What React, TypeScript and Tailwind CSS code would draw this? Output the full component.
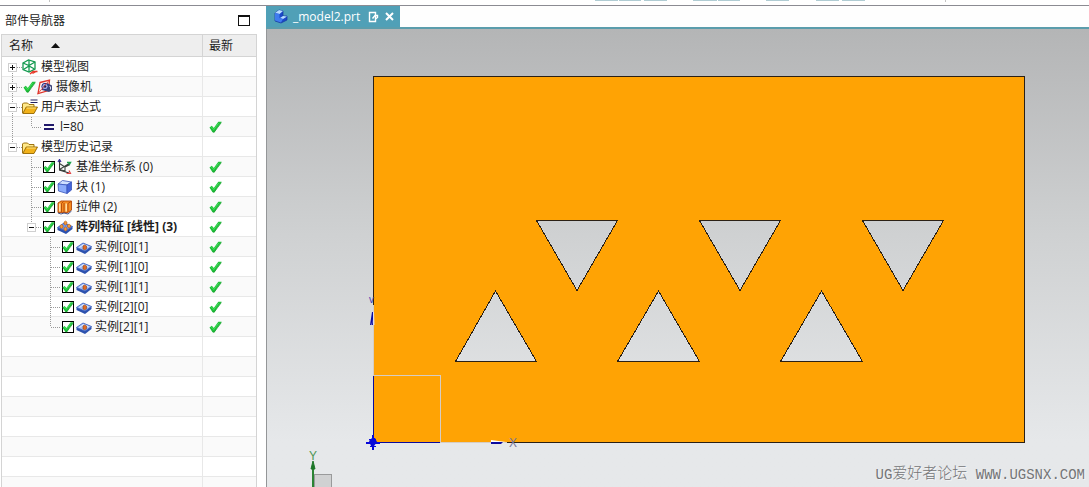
import React, { useState } from "react";

type IconName = "view" | "camera" | "expr" | "folder" | "equals" | "csys" | "block" | "extrude" | "pattern" | "instance";
type Guide = "none" | "blank" | "line" | "tee" | "end" | "plus" | "minus-mid" | "minus-end";

interface TreeItem {
  id: string;
  label: string;
  icon: IconName;
  guides: Guide[];
  checkbox?: boolean;
  tick?: boolean;
  latest?: boolean;
  bold?: boolean;
}

const items: TreeItem[] = [
  { id: "views", label: "模型视图", icon: "view", guides: ["plus"] },
  { id: "cameras", label: "摄像机", icon: "camera", guides: ["plus"], tick: true },
  { id: "exprs", label: "用户表达式", icon: "expr", guides: ["minus-mid"] },
  { id: "l", label: "l=80", icon: "equals", guides: ["line", "end"], latest: true },
  { id: "history", label: "模型历史记录", icon: "folder", guides: ["minus-end"] },
  { id: "csys", label: "基准坐标系 (0)", icon: "csys", guides: ["blank", "tee"], checkbox: true, latest: true },
  { id: "block", label: "块 (1)", icon: "block", guides: ["blank", "tee"], checkbox: true, latest: true },
  { id: "extrude", label: "拉伸 (2)", icon: "extrude", guides: ["blank", "tee"], checkbox: true, latest: true },
  { id: "pattern", label: "阵列特征 [线性] (3)", icon: "pattern", guides: ["blank", "minus-end"], checkbox: true, latest: true, bold: true },
  { id: "i01", label: "实例[0][1]", icon: "instance", guides: ["blank", "blank", "tee"], checkbox: true, latest: true },
  { id: "i10", label: "实例[1][0]", icon: "instance", guides: ["blank", "blank", "tee"], checkbox: true, latest: true },
  { id: "i11", label: "实例[1][1]", icon: "instance", guides: ["blank", "blank", "tee"], checkbox: true, latest: true },
  { id: "i20", label: "实例[2][0]", icon: "instance", guides: ["blank", "blank", "tee"], checkbox: true, latest: true },
  { id: "i21", label: "实例[2][1]", icon: "instance", guides: ["blank", "blank", "end"], checkbox: true, latest: true },
];

const emptyRows = [0, 1, 2, 3, 4, 5, 6, 7];

const Tick = ({ className = "" }: { className?: string }) => (
  <svg width="13" height="12" viewBox="0 0 13 12" className={className} aria-hidden="true">
    <path d="M0.5 6.5 L2.8 4.8 L4.8 7 L9.3 0.8 L12.7 0.8 L8.2 6.8 L5.2 11.6 L3.3 11 Z" fill="#1fc03a" />
    <path d="M12.3 1.6 L8.4 6.8 L5.2 11.2 L3.6 10.8" fill="none" stroke="#149a2a" strokeWidth=".8" />
    <path d="M2.4 6 L4.7 8.6 L9.8 1.8" fill="none" stroke="#42e05a" strokeWidth="1" />
  </svg>
);

const ItemIcon = ({ name }: { name: IconName }) => (
  <svg width="16" height="16" viewBox="0 0 16 16" className="shrink-0" aria-hidden="true">
    {name === "view" && (
      <g fill="none" stroke="#149a50" strokeWidth="1.3">
        <path d="M1 4 L6.5 1 L13 3 V10 L7 13 L1 10.5 Z" />
        <path d="M1 4 L7 6.5 L13 3 M7 1 V13 M1.5 10.5 L7 7 L12.5 10" />
        <path d="M8 15 L11 12.5 H15.5 M10.5 14.5 L15 12" stroke="#e83a2a" strokeWidth="1.4" />
      </g>
    )}
    {name === "camera" && (
      <g>
        <path d="M3 3.5 L12.5 1 L11.5 11.5 L1 14.5 Z" fill="#fff0ee" stroke="#e0352c" strokeWidth="1.3" />
        <path d="M5 6 L10 4 L15 6.5 V11.5 L12 13 L5 11 Z" fill="#3c4478" />
        <circle cx="8" cy="7.5" r="3.2" fill="#a3afe6" stroke="#2a3384" />
        <circle cx="8" cy="7.5" r="1.3" fill="#1c2258" />
        <path d="M1 14.5 L12.5 1" stroke="#e0352c" strokeWidth=".8" />
        <path d="M12.5 7 L13.5 8 V10.5" stroke="#d8dcef" fill="none" />
      </g>
    )}
    {(name === "folder" || name === "expr") && (
      <g stroke="#946600" strokeWidth=".9">
        <path d="M.5 14 V5 L1.5 4 H5.5 L7 5.5 H12 V8" fill="#ffe98a" />
        <path d="M.8 14.5 L4.2 8 H15.5 L12 14.5 Z" fill="#f2b21a" />
        <path d="M4.7 9 H13.8" stroke="#ffe78a" />
        {name === "expr" && <path d="M8.5 1 H15.5 M8.5 3.5 H15.5" stroke="#202060" strokeWidth="1.1" />}
      </g>
    )}
    {name === "equals" && <path d="M3 6 H13 M3 10 H13" stroke="#20186a" strokeWidth="2" />}
    {name === "csys" && (
      <g fill="none" strokeWidth="1.1">
        <path d="M2.5 2 V11 L12 14" stroke="#333" />
        <path d="M2.5 10.5 L13 4 M2.5 4.5 L8 8 V12 L2.5 10.5 M8 8 L13 5.5" stroke="#37423c" />
        <path d="M10 3.5 H13.5 L12 6" stroke="#18a04a" strokeWidth="1.4" />
        <path d="M9.5 14.5 H13.5 L12 11.5" stroke="#e24343" strokeWidth="1.2" />
        <path d="M1 3 L2.5 .5 L4 3" stroke="#302c9d" strokeWidth="1.2" />
      </g>
    )}
    {name === "block" && (
      <g stroke="#3a55bb" strokeWidth=".8" strokeLinejoin="round">
        <path d="M1 5 L5.5 1.5 L14.5 3 L10 6 Z" fill="#cfe0ff" />
        <path d="M1 5 L10 6 V14.5 L1.5 12 Z" fill="#8cacfb" />
        <path d="M10 6 L14.5 3 V11 L10 14.5 Z" fill="#4565da" />
      </g>
    )}
    {name === "extrude" && (
      <g stroke="#b4480a" strokeWidth=".9">
        <path d="M1 4 L4 2 H14.5 V11 L11 13.5 H1 Z" fill="#f58b20" />
        <path d="M2.8 4.5 V12.5 M9.2 4.5 V12.5" stroke="#ffdca0" strokeWidth="1.6" />
        <path d="M4.5 4.5 L6.5 2.5 M4.5 4.5 V13 M7 4 V13 M11 4.5 V13 M11 4.5 L14 2.5" />
        <path d="M1 14 L4 15 L7 14 L11 15 L14.5 12" fill="none" stroke="#30427c" />
      </g>
    )}
    {(name === "pattern" || name === "instance") && (
      <g>
        <path d="M.5 8.5 L7 4 L15.5 7.5 V10 L9 15 L.5 11 Z" fill="#2c51ae" />
        <path d="M.5 8.5 L7 4 L15.5 7.5 L9 12 Z" fill={name === "instance" ? "#a3bef6" : "#6f96ea"} stroke="#4066c4" strokeWidth=".8" />
        {name === "pattern" ? (
          <g fill="#f5983a" stroke="#a65012" strokeWidth=".5">
            <path d="M7 5 V3 L8.5 2 L10 3 V5 L8.5 6 Z" />
            <path d="M3 8.5 V6.5 L4.5 5.5 L6 6.5 V8.5 L4.5 9.5 Z" />
            <path d="M10.5 8 V6 L12 5 L13.5 6 V8 L12 9 Z" />
            <path d="M7 11 V9 L8.5 8 L10 9 V11 L8.5 12 Z" />
          </g>
        ) : (
          <g>
            <path d="M3.5 8.5 L7.3 5.7 L12.5 7.7" fill="none" stroke="#f4f8ff" strokeWidth=".8" />
            <path d="M7 10 V7 L8.5 6 L10.5 7 V9.8 L8.8 10.8 Z" fill="#e06a24" stroke="#8e441d" strokeWidth=".6" />
          </g>
        )}
      </g>
    )}
  </svg>
);

// One 19px wide step of the tree, with its dotted connectors
const GuideCell = ({ guide, first, label }: { guide: Guide; first: boolean; label: string }) => {
  const toggle = guide === "plus" || guide === "minus-mid" || guide === "minus-end";
  const up = guide !== "blank" && !first;
  const down = guide === "tee" || guide === "line" || guide === "plus" || guide === "minus-mid";
  const across = toggle || guide === "tee" || guide === "end";
  const lines = (
    <svg width="19" height="19" shapeRendering="crispEdges" stroke="#999" strokeDasharray="1 1" aria-hidden="true">
      {up && <path d="M9.5 0 V10" />}
      {down && <path d="M9.5 10 V19" />}
      {across && <path d="M10 10.5 H19" />}
      {toggle && (
        <g strokeDasharray="none">
          <rect x="5.5" y="6.5" width="8" height="8" fill="#fff" stroke="#cfcfcf" />
          <path d="M7 10.5 H12" stroke="#111" />
          {guide === "plus" && <path d="M9.5 8 V13" stroke="#111" />}
        </g>
      )}
    </svg>
  );
  if (toggle) {
    return (
      <button type="button" aria-label={label} className="w-[19px] h-[19px] shrink-0">
        {lines}
      </button>
    );
  }
  return <span className="w-[19px] h-[19px] shrink-0">{lines}</span>;
};

const TreeRow = ({ item, index }: { item: TreeItem; index: number }) => {
  const [checked, setChecked] = useState(true);
  return (
    <tr className="even:bg-[#fafafa]">
      <td className="p-0 border-b border-r border-[#e8e8e8]">
        <div className="flex items-center h-[19px] pl-px">
          {item.guides.map((guide, i) => (
            <GuideCell key={i} guide={guide} first={index === 0} label={item.label} />
          ))}
          {item.checkbox && (
            <span className="relative w-3 h-3 mx-0.5 mt-px shrink-0">
              <input
                id={item.id}
                type="checkbox"
                checked={checked}
                onChange={(e) => setChecked(e.target.checked)}
                className="block appearance-none w-3 h-3 bg-white border border-black"
              />
              {checked && <Tick className="absolute inset-0 pointer-events-none w-3 h-3" />}
            </span>
          )}
          {item.tick && <Tick className="mx-px shrink-0" />}
          <ItemIcon name={item.icon} />
          {item.checkbox ? (
            <label htmlFor={item.id} className={item.bold ? "ml-[3px] font-bold whitespace-nowrap" : "ml-[3px] whitespace-nowrap"}>
              {item.label}
            </label>
          ) : (
            <span className="ml-[3px] whitespace-nowrap">{item.label}</span>
          )}
        </div>
      </td>
      <td className="p-0 pl-1.5 border-b border-[#e8e8e8]">{item.latest && <Tick />}</td>
    </tr>
  );
};

const Navigator = () => (
  <aside className="w-[266px] shrink-0 flex flex-col overflow-hidden bg-white">
    <div className="flex items-center justify-between h-7 shrink-0 pl-[5px] pr-4 pt-px">
      <h2>部件导航器</h2>
      <button type="button" aria-label="最大化" className="w-3 h-[11px] border border-t-2 border-[#111]" />
    </div>
    <div className="flex-1 min-h-0 overflow-hidden ml-px mr-[9px] border border-b-0 border-[#d4d4d4]">
      <table className="w-full table-fixed border-separate border-spacing-0">
        <thead className="bg-[#eeeeee]">
          <tr>
            <th className="h-[22px] p-0 pl-[7px] font-normal text-left border-b border-r border-[#d4d4d4]">
              <div className="flex items-center">
                名称
                <svg width="9" height="5" viewBox="0 0 9 5" className="ml-[18px]" aria-hidden="true">
                  <path d="M4.5 0 L9 5 H0 Z" fill="#111" />
                </svg>
              </div>
            </th>
            <th className="w-[53px] h-[22px] p-0 pl-1.5 font-normal text-left border-b border-[#d4d4d4]">最新</th>
          </tr>
        </thead>
        <tbody>
          {items.map((item, index) => (
            <TreeRow key={item.id} item={item} index={index} />
          ))}
          {emptyRows.map((row) => (
            <tr key={row} className="even:bg-[#fafafa]">
              <td className="h-5 p-0 border-b border-r border-[#e8e8e8]" />
              <td className="h-5 p-0 border-b border-[#e8e8e8]" />
            </tr>
          ))}
        </tbody>
      </table>
    </div>
  </aside>
);

const ModelDrawing = () => (
  <svg className="block w-full h-full" role="img" aria-label="model2" fontFamily="'Liberation Sans', sans-serif">
    {/* plate with the two rows of triangular cut-outs */}
    <path
      fillRule="evenodd"
      fill="#ffa304"
      stroke="#2b2014"
      shapeRendering="crispEdges"
      d="M106.5 47.5 H757.5 V413.5 H106.5 Z
         M269.5 191.5 H350.5 L310 261.5 Z M432.5 191.5 H513.5 L473 261.5 Z M595.5 191.5 H676.5 L636 261.5 Z
         M228.5 262 L269.5 332.5 H188.5 Z M391.5 262 L432.5 332.5 H350.5 Z M554.5 262 L595.5 332.5 H513.5 Z"
    />
    <g fill="none" shapeRendering="crispEdges">
      <path d="M106.5 276 V346.5 H173.5 V413.5 H240" stroke="#d6cdc4" />
      <path d="M106.5 347 V413.5 H173" stroke="#0b0b9c" />
      <path d="M105.5 406 V421 M99 413.5 H113" stroke="#0808d8" strokeWidth="2" />
      <path d="M102 410.5 H109 M103 417.5 H109" stroke="#0808d8" />
    </g>
    <path d="M102 412 L105 409 H108 L110 413 L107 417 H104 Z" fill="#0808d8" />
    <path d="M103 296 L105 283 L107 283 L107.5 296 Z" fill="#dcdcf0" />
    <path d="M103 296 L105 283 H106 V296 H105 L105.5 290 L104.5 296 Z" fill="#0c0ca0" />
    <path d="M224 411 L239 413 L224 415 Z" fill="#ffffff" />
    <path d="M224 413 H236 L234 415 H224 Z" fill="#0c0ca0" />
    <text x="102" y="274" fontSize="10" fill="#3c3cb4">v</text>
    <text x="242" y="418" fontSize="12" fill="#77779a">X</text>
    {/* view triad */}
    <rect x="47.5" y="445.5" width="17" height="20" fill="#d0d1d2" stroke="#999a9b" shapeRendering="crispEdges" />
    <path d="M46 440 V460" stroke="#2b8434" strokeWidth="2" />
    <path d="M46 432 L48 440 H44 Z" fill="#1c7628" stroke="#1c7628" />
    <text x="42" y="431" fontSize="12" fill="#4d9654">Y</text>
  </svg>
);

const Viewport = () => (
  <main className="flex-1 min-w-0 flex flex-col bg-[#fefefe]">
    <div className="flex h-[23px] shrink-0 border-b-2 border-[#5b9dac]">
      <div className="flex items-center w-[134px] pl-2 text-white bg-[#50a0b7]">
        <svg width="14" height="15" viewBox="0 0 14 15" aria-hidden="true">
          <path d="M1 4 L5 1 L9 2 V7 L13 7 V11 L7 14 L1 12 Z" fill="#1b48c8" stroke="#1638a0" strokeWidth=".7" />
          <path d="M1 4 L5 1 L9 2 L5.5 5 Z M6 9 L9 7 L13 7.5 L9 10 Z" fill="#b7dcff" />
          <path d="M1 4 L5.5 5 V9 L9 10 L7 13.5 L1 11.5 Z" fill="#3f7cee" />
        </svg>
        <span className="ml-[5px]">_model2.prt</span>
        <svg width="11" height="12" viewBox="0 0 11 12" className="ml-2" fill="none" stroke="#fff" strokeWidth="1.4" aria-hidden="true">
          <path d="M5.5 10.5 H1.5 V1.5 H7.5 V10.5 H5.5" />
          <path d="M4.5 7.5 L7 4.5 H9.5 V6.5 L7.5 8" />
        </svg>
        <button type="button" aria-label="关闭" className="ml-1.5">
          <svg width="9" height="9" viewBox="0 0 9 9" stroke="#fff" strokeWidth="2">
            <path d="M1 1 L8 8 M8 1 L1 8" />
          </svg>
        </button>
      </div>
    </div>
    <div className="relative flex-1 min-h-0 overflow-hidden border-l border-[#949698] bg-linear-to-b from-[#b4b5b6] via-[#cfd1d2] via-45% to-[#e6e8ea] to-90%">
      <ModelDrawing />
      <p className="absolute right-1 bottom-0.5 flex items-center text-[#747577] leading-5 whitespace-pre [text-shadow:1px_1px_0_#f4f5f6] font-['Liberation_Mono','Noto_Sans_CJK_SC',monospace]">
        <span className="text-[14px]">UG</span>
        <span className="text-[15px] font-light">爱好者论坛</span>
        <span className="text-[14px]"> WWW.UGSNX.COM</span>
      </p>
    </div>
  </main>
);

export default function App() {
  return (
    <div className="flex flex-col h-screen overflow-hidden bg-white text-[12px] leading-4 text-[#1c1c1c] font-['Open_Sans','Noto_Sans_CJK_SC',sans-serif]">
      <div className="h-1.5 shrink-0 border-b border-[#8b8b92] bg-white">
        <svg className="block w-full h-[5px]" shapeRendering="crispEdges" aria-hidden="true">
          <path d="M595 .5 H618 M619 .5 H641 M644 .5 H667 M693 .5 H717 M718 .5 H740 M766 .5 H789 M816 .5 H839 M842 .5 H865" stroke="#b0ccd3" />
          <path d="M49.5 0 V2 M945.5 0 V2" stroke="#c4c4c4" />
        </svg>
      </div>
      <div className="flex flex-1 min-h-0">
        <Navigator />
        <Viewport />
      </div>
    </div>
  );
}
